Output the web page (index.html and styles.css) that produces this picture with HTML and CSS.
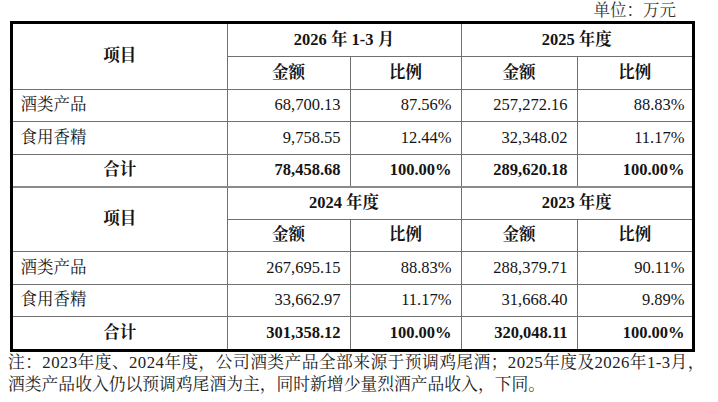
FILE: index.html
```html
<!DOCTYPE html>
<html lang="zh-CN">
<head>
<meta charset="utf-8">
<title>收入构成</title>
<link rel="stylesheet" href="styles.css">
</head>
<body>
<div class="page">
  <div class="unit">单位：万元</div>
  <div class="frame">
    <table class="grid">
      <colgroup>
        <col class="c1"><col class="c2"><col class="c3"><col class="c4"><col class="c5">
      </colgroup>
      <tr class="row">
        <th rowspan="2">项目</th>
        <th colspan="2">2026 年 1-3 月</th>
        <th colspan="2">2025 年度</th>
      </tr>
      <tr class="row">
        <th>金额</th><th>比例</th><th>金额</th><th>比例</th>
      </tr>
      <tr class="row">
        <td class="name">酒类产品</td>
        <td class="num">68,700.13</td>
        <td class="num">87.56%</td>
        <td class="num">257,272.16</td>
        <td class="num last">88.83%</td>
      </tr>
      <tr class="row">
        <td class="name">食用香精</td>
        <td class="num">9,758.55</td>
        <td class="num">12.44%</td>
        <td class="num">32,348.02</td>
        <td class="num last">11.17%</td>
      </tr>
      <tr class="row total">
        <td class="label">合计</td>
        <td class="num">78,458.68</td>
        <td class="num">100.00%</td>
        <td class="num">289,620.18</td>
        <td class="num last">100.00%</td>
      </tr>
      <tr class="row split">
        <th rowspan="2">项目</th>
        <th colspan="2">2024 年度</th>
        <th colspan="2">2023 年度</th>
      </tr>
      <tr class="row">
        <th>金额</th><th>比例</th><th>金额</th><th>比例</th>
      </tr>
      <tr class="row">
        <td class="name">酒类产品</td>
        <td class="num">267,695.15</td>
        <td class="num">88.83%</td>
        <td class="num">288,379.71</td>
        <td class="num last">90.11%</td>
      </tr>
      <tr class="row">
        <td class="name">食用香精</td>
        <td class="num">33,662.97</td>
        <td class="num">11.17%</td>
        <td class="num">31,668.40</td>
        <td class="num last">9.89%</td>
      </tr>
      <tr class="row total">
        <td class="label">合计</td>
        <td class="num">301,358.12</td>
        <td class="num">100.00%</td>
        <td class="num">320,048.11</td>
        <td class="num last">100.00%</td>
      </tr>
    </table>
  </div>
  <p class="note"><span class="spread">注：2023年度、2024年度，公司酒类产品全部来源于预调鸡尾酒；2025年度及2026年1-3月，</span><br>酒类产品收入仍以预调鸡尾酒为主，同时新增少量烈酒产品收入，下同。</p>
</div>
</body>
</html>
```

FILE: styles.css
```css
html, body {
  margin: 0;
  padding: 0;
  background: #ffffff;
}

.page {
  width: 718px;
  font-family: "Liberation Serif", "Noto Serif CJK SC", "Noto Sans CJK SC", serif;
  color: #141414;
}

.unit {
  height: 21px;
  line-height: 22px;
  font-size: 16.5px;
  text-align: right;
  padding-right: 42px;
  color: #333;
}

.frame {
  margin-left: 10px;
  width: 679px;
  border: 3px solid #000;
}

.grid {
  width: 679px;
  table-layout: fixed;
  border-collapse: collapse;
  border-style: hidden;
  font-size: 16.5px;
}

.c1 { width: 214px; }
.c2 { width: 123px; }
.c3 { width: 111px; }
.c4 { width: 116px; }
.c5 { width: 115px; }

.row {
  height: 32.5px;
}

.grid th,
.grid td {
  border: 1px solid #707070;
  padding: 0 9px;
  vertical-align: middle;
  white-space: nowrap;
  line-height: 20px;
}

.grid th {
  font-weight: bold;
  text-align: center;
}

.split th {
  border-top: 2px solid #8a8a8a;
}

.grid .name {
  text-align: left;
  padding-left: 7.5px;
}

.grid .num {
  text-align: right;
}

.grid .last {
  padding-right: 7.5px;
}

.total td {
  font-weight: bold;
}

.total .label {
  text-align: center;
}

.note {
  margin: 0;
  padding-left: 8px;
  font-size: 16.8px;
  line-height: 22px;
  color: #222;
  white-space: nowrap;
}

.spread {
  letter-spacing: 0.4px;
}
```
